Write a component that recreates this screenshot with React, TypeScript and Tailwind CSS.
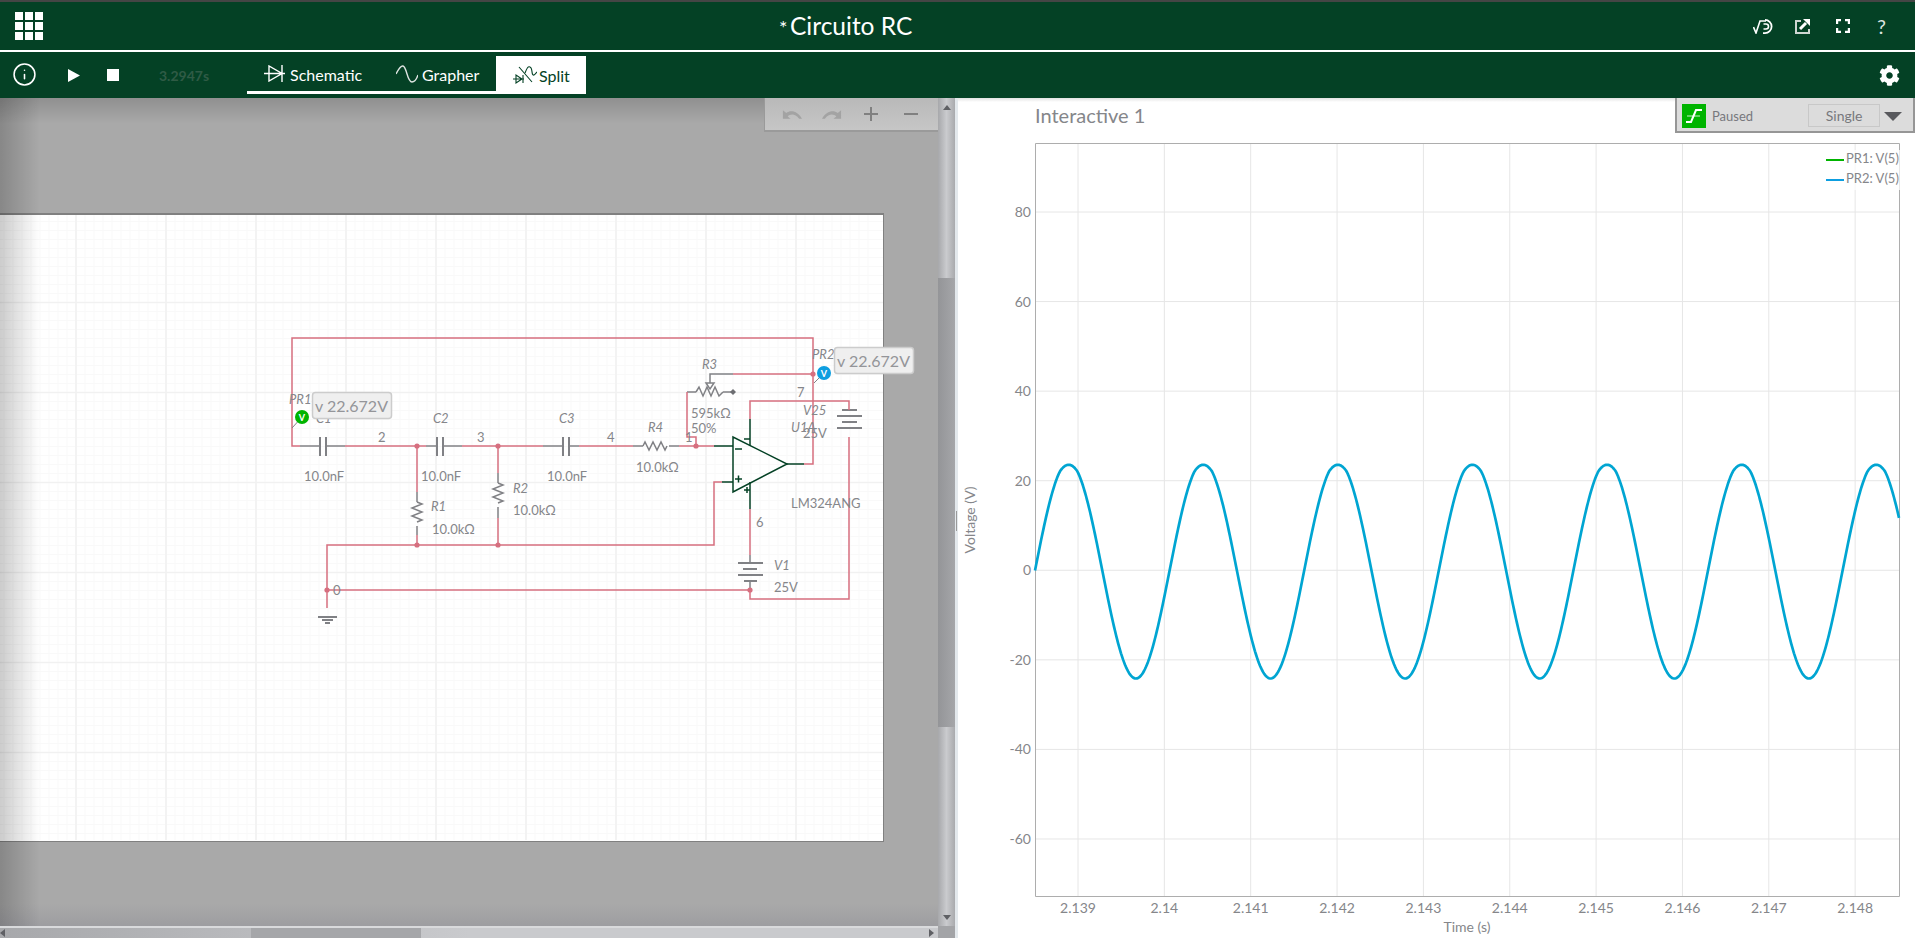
import { Info } from "lucide-react";
import { FaCog } from "react-icons/fa";

const GREEN = "#044125";

// scope trace, sampled per pixel; the top is softly clipped like the real output
const wave = Array.from({ length: 865 }, (_, i) => {
  const v = Math.sin((i / 134.6) * Math.PI * 2) * 108;
  const clipped = v > 99 ? 99 + (v - 99) * 0.75 : v;
  return `${1034 + i},${(570.5 - clipped).toFixed(1)}`;
}).join(" ");

const xTicks = ["2.139", "2.14", "2.141", "2.142", "2.143", "2.144", "2.145", "2.146", "2.147", "2.148"];
const yTicks = ["80", "60", "40", "20", "0", "-20", "-40", "-60"];

const pinkWires = [
  "300,446 292,446 292,338 813,338 813,464 804,464",
  "345,446 426,446",
  "462,446 543,446",
  "579,446 633,446",
  "679,446 714,446",
  "417,446 417,492",
  "417,535 417,545",
  "498,446 498,473",
  "498,518 498,545",
  "696,446 696,437 687,437 687,392",
  "813,374 733,374",
  "722,482 714,482 714,545 327,545 327,608",
  "327,590 750,590",
  "750,590 750,599 849,599 849,437",
  "849,410 849,401 750,401 750,419",
  "750,509 750,555",
];

const grayWires = [
  "300,446 320,446",
  "326,446 345,446",
  "426,446 437,446",
  "443,446 462,446",
  "543,446 563,446",
  "569,446 579,446",
  "633,446 643,446",
  "669,446 679,446",
  "417,492 417,502",
  "417,526 417,535",
  "498,473 498,483",
  "498,507 498,518",
  "687,392 696,392",
  "723,392 733,392",
  "733,374 710,374 710,383",
  "750,555 750,563",
  "750,581 750,590",
];

const plates = [
  "320,437 320,456",
  "326,437 326,456",
  "437,437 437,456",
  "443,437 443,456",
  "563,437 563,456",
  "569,437 569,456",
  "842,410 857,410",
  "837,416 862,416",
  "842,422 857,422",
  "837,428 862,428",
  "738,563 763,563",
  "743,569 757,569",
  "738,575 763,575",
  "744,581 757,581",
  "318,617 337,617",
  "322,620 333,620",
  "325,623 330,623",
];

const junctions = [
  [417, 446],
  [498, 446],
  [417, 545],
  [498, 545],
  [696, 446],
  [327, 590],
  [750, 590],
  [813, 374],
];

const labels: [string, number, number, boolean?][] = [
  ["PR1", 289, 404, true],
  ["C1", 316, 423, true],
  ["2", 378, 442],
  ["C2", 433, 423, true],
  ["3", 477, 442],
  ["C3", 559, 423, true],
  ["10.0nF", 304, 481],
  ["10.0nF", 421, 481],
  ["10.0nF", 547, 481],
  ["R1", 431, 511, true],
  ["10.0kΩ", 432, 534],
  ["R2", 513, 493, true],
  ["10.0kΩ", 513, 515],
  ["0", 333, 595],
  ["4", 607, 442],
  ["R4", 648, 432, true],
  ["10.0kΩ", 636, 472],
  ["1", 685, 442],
  ["R3", 702, 369, true],
  ["595kΩ", 691, 418],
  ["50%", 691, 433],
  ["7", 797, 397],
  ["PR2", 812, 359, true],
  ["V25", 803, 415, true],
  ["U1A", 791, 432, true],
  ["25V", 803, 438],
  ["LM324ANG", 791, 508],
  ["6", 756, 527],
  ["V1", 774, 570, true],
  ["25V", 774, 592],
];

function Circuit() {
  const majorX = Array.from({ length: 9 }, (_, i) => 76 + i * 90);
  const majorY = Array.from({ length: 6 }, (_, i) => 302.5 + i * 90);
  const minorX = Array.from({ length: 97 }, (_, i) => 4 + i * 9);
  const minorY = Array.from({ length: 69 }, (_, i) => 221.5 + i * 9);

  return (
    <svg viewBox="0 213 884 628" className="absolute top-0 left-0 w-[884px] h-[628px] overflow-visible">
      {minorX.map((x) => (
        <line key={x} x1={x} x2={x} y1={215} y2={840} className="stroke-[#f9f9f9]" />
      ))}
      {minorY.map((y) => (
        <line key={y} x1={0} x2={883} y1={y} y2={y} className="stroke-[#f9f9f9]" />
      ))}
      {majorX.map((x) => (
        <line key={x} x1={x} x2={x} y1={215} y2={840} strokeWidth={1.5} className="stroke-[#f1f1f1]" />
      ))}
      {majorY.map((y) => (
        <line key={y} x1={0} x2={883} y1={y} y2={y} strokeWidth={1.5} className="stroke-[#f1f1f1]" />
      ))}

      <g fill="none" strokeWidth={1.5} className="stroke-[#808185]">
        {grayWires.map((p) => (
          <polyline key={p} points={p} />
        ))}
        {plates.map((p) => (
          <polyline key={p} points={p} strokeWidth={2} />
        ))}
        <path d="M417 502 l5 2 l-10 4 l10 4 l-10 4 l10 4 l-5 2" />
        <path d="M498 483 l5 2 l-10 4 l10 4 l-10 4 l10 4 l-5 2" />
        <path d="M643 446 l2 -4 l4 8 l4 -8 l4 8 l4 -8 l4 8 l2 -4" />
        <path d="M696 392 l3 -5 l4 9 l4 -9 l4 9 l4 -9 l4 9 l4 -4" />
        <path d="M706 383 h8 l-4 6 z" />
      </g>
      <path d="M733 389 l3 3 l-3 3 l-3 -3 z" className="fill-[#6d6e72]" />

      <g fill="none" strokeWidth={1.5} className="stroke-[#d66f7f]">
        {pinkWires.map((p) => (
          <polyline key={p} points={p} />
        ))}
      </g>
      {junctions.map(([x, y]) => (
        <circle key={`${x}-${y}`} cx={x} cy={y} r={2.6} className="fill-[#d66f7f]" />
      ))}

      <g fill="none" strokeWidth={1.5} className="stroke-[#044125]">
        <polygon points="733,437 733,492 787,464" />
        <polyline points="714,446 733,446" />
        <polyline points="722,482 733,482" />
        <polyline points="750,419 750,446" />
        <polyline points="750,482 750,509" />
        <polyline points="787,464 804,464" />
        <path d="M735 449 h7 M735 479 h7 M738.5 475.5 v7 M744 439 h6 M744 490 h6 M747 487 v6" />
      </g>

      {labels.map(([t, x, y, italic]) => (
        <text key={`${t}-${x}`} x={x} y={y} className={`text-[13px] fill-[#85868a] ${italic ? "italic" : ""}`}>
          {t}
        </text>
      ))}

      <polyline points="302,417 292,428" strokeWidth={1} fill="none" className="stroke-[#808185]" />
      <circle cx={302} cy={417} r={7} className="fill-[#00b400]" />
      <text x={302} y={420.5} textAnchor="middle" className="text-[9px] font-bold fill-white">
        V
      </text>
      <polyline points="824,373 814,383" strokeWidth={1} fill="none" className="stroke-[#808185]" />
      <circle cx={824} cy={373} r={7} className="fill-[#0d9ee0]" />
      <text x={824} y={376.5} textAnchor="middle" className="text-[9px] font-bold fill-white">
        V
      </text>

      <rect x={312.5} y={392.5} width={79} height={26} rx={3} strokeWidth={1.5} className="fill-[#efefef] stroke-[#cccccc]" />
      <text x={315} y={412} className="text-[16px] fill-[#949599]">
        v 22.672V
      </text>
      <rect x={834.5} y={347.5} width={79} height={26} rx={3} strokeWidth={1.5} className="fill-[#efefef] stroke-[#cccccc]" />
      <text x={837} y={367} className="text-[16px] fill-[#949599]">
        v 22.672V
      </text>
    </svg>
  );
}

function Chart() {
  return (
    <svg viewBox="957 98 958 840" className="w-[958px] h-[840px]">
      {xTicks.map((t, i) => {
        const x = 1077 + i * 86.35;
        return (
          <g key={t}>
            <line x1={x} x2={x} y1={143} y2={896} strokeWidth={1} className="stroke-[#e6e6e6]" />
            <text x={x} y={913} textAnchor="middle" className="text-[14px] fill-[#85868a]">
              {t}
            </text>
          </g>
        );
      })}
      {yTicks.map((t, i) => {
        const y = 212 + i * 89.57;
        return (
          <g key={t}>
            <line x1={1034} x2={1898} y1={y} y2={y} strokeWidth={1} className="stroke-[#e6e6e6]" />
            <text x={1030} y={y + 5} textAnchor="end" className="text-[14px] fill-[#85868a]">
              {t}
            </text>
          </g>
        );
      })}
      <polyline points="1034.5,143.5 1898.5,143.5 1898.5,896.5 1034.5,896.5 1034.5,143.5" fill="none" strokeWidth={1} className="stroke-[#adadad]" />
      <polyline points={wave} fill="none" strokeWidth={2.7} strokeLinejoin="round" className="stroke-[#00a5d2]" />

      <rect x={1826} y={150} width={76} height={40} className="fill-white opacity-70" />
      <line x1={1825} x2={1843} y1={160} y2={160} strokeWidth={2} className="stroke-[#00b400]" />
      <line x1={1825} x2={1843} y1={180} y2={180} strokeWidth={2} className="stroke-[#0d9ee0]" />
      <text x={1845} y={163} className="text-[13px] fill-[#85868a]">
        PR1: V(5)
      </text>
      <text x={1845} y={183} className="text-[13px] fill-[#85868a]">
        PR2: V(5)
      </text>

      <text x={1466} y={932} textAnchor="middle" className="text-[14px] fill-[#85868a]">
        Time (s)
      </text>
      <text transform="translate(974 520) rotate(-90)" textAnchor="middle" className="text-[14px] fill-[#85868a]">
        Voltage (V)
      </text>
    </svg>
  );
}

function Header() {
  return (
    <div className="h-[50px] shrink-0 flex items-center border-t-2 border-[#454545] bg-[#044125] text-white">
      <div className="ml-[15px] grid grid-cols-3 gap-[2px]">
        {Array.from({ length: 9 }, (_, i) => (
          <span key={i} className="w-2 h-2 bg-white" />
        ))}
      </div>
      <div className="ml-[736px] flex items-baseline">
        <span className="text-[20px] leading-none w-[11px]">*</span>
        <span className="text-[24.5px] leading-none">Circuito RC</span>
      </div>
      <svg viewBox="0 0 23 15" className="ml-auto w-[23px] h-[15px]" fill="none" stroke="#fff">
        <path d="M0.5 8 L3 14 L7 2 H13" strokeWidth={1.6} />
        <path d="M12 0.9 A6.6 6.6 0 1 1 12 14.1 H10" strokeWidth={1.8} />
        <path d="M10.5 5 H13 A2.5 2.5 0 1 1 13 10 H10.5" strokeWidth={1.6} />
      </svg>
      <svg viewBox="0 0 15 15" className="ml-[19px] w-[15px] h-[15px]" fill="none">
        <path d="M6 2 H1 V14 H14 V10" strokeWidth={2} stroke="#cfd6d2" />
        <path d="M5 10 L11 4" strokeWidth={3} stroke="#fff" />
        <path d="M8 0 H15 V7 Z" fill="#fff" />
      </svg>
      <svg viewBox="0 0 14 14" className="ml-[26px] w-[14px] h-[14px]" fill="none" stroke="#fff" strokeWidth={2.4}>
        <path d="M1 5 V1 H5 M9 1 H13 V5 M13 9 V13 H9 M5 13 H1 V9" />
      </svg>
      <span className="ml-[27px] mr-[26px] w-3 text-[20px] leading-none text-[#dfe5e2]">?</span>
    </div>
  );
}

function Toolbar() {
  return (
    <div className="h-[46px] shrink-0 flex items-start bg-[#044125] text-white">
      <Info size={25} strokeWidth={1.5} className="ml-3 mt-[10px]" />
      <svg viewBox="0 0 12 13" className="ml-[31px] mt-[17px] w-3 h-[13px]" fill="#fff">
        <path d="M0 0 L12 6.5 L0 13 Z" />
      </svg>
      <span className="ml-[27px] mt-[17px] w-3 h-3 bg-white" />
      <span className="ml-[40px] mt-[13px] w-[50px] text-[14px] font-bold text-[#2f5b45]">3.2947s</span>
      <div className="ml-[38px] mt-1 h-[38px] flex items-stretch">
        <div className="w-[132px] pl-[17px] pt-[2px] flex items-center gap-[5px] border-b-[3px] border-white text-[16px]">
          <svg viewBox="0 0 21 17" className="-mt-[2px] w-[21px] h-[17px]" fill="none" stroke="#fff" strokeWidth={1.4}>
            <path d="M0 8.5 H21 M5 1 V16 L18 8.5 Z M18 0 V17" />
          </svg>
          <span>Schematic</span>
        </div>
        <div className="w-[117px] pl-[17px] pt-[2px] flex items-center gap-[4px] border-b-[3px] border-white text-[16px]">
          <svg viewBox="0 0 22 18" className="-mt-[2px] w-[22px] h-[18px]" fill="none" stroke="#dfe5e2" strokeWidth={1.4}>
            <path d="M0 9 C3 3 5 0.5 7 1 C11 2 11 17 16 17 C19 17 21 13 22 10" />
          </svg>
          <span>Grapher</span>
        </div>
        <div className="w-[90px] pl-[17px] pt-[2px] flex items-center gap-[2px] bg-white text-[16px] text-[#044125]">
          <svg viewBox="0 0 24 18" className="-mt-[2px] w-6 h-[18px]" fill="none" stroke="#044125" strokeWidth={1.1}>
            <path d="M0 13 H11 M3 9 V17 L9 13 Z M10 9 V17 M6 1 L19 16" />
            <path d="M12 7 C14 2 15 0 17 1 C20 2 18 10 21 9 C22 8.5 23 7 24 6" />
          </svg>
          <span>Split</span>
        </div>
      </div>
      <FaCog size={21} className="ml-auto mr-[15px] mt-[13px]" />
    </div>
  );
}

function UndoBar() {
  return (
    <div className="absolute top-0 right-0 w-[174px] h-[34px] flex items-center bg-gradient-to-b from-[#b9b9b9] to-[#c6c6c6] border-l border-b-2 border-[#9a9a9a] pl-[16px]">
      <svg viewBox="0 0 22 11" className="w-[21px] h-[11px] fill-[#a3a3a3]">
        <path d="M2 1 L2 10 L10 10 L7 7.5 C10 4.5 15 4.5 19 10 L22 10 C18 2 10 0 5.5 4 Z" />
      </svg>
      <svg viewBox="0 0 22 11" className="ml-[20px] w-[21px] h-[11px] fill-[#a3a3a3]">
        <path d="M20 1 L20 10 L12 10 L15 7.5 C12 4.5 7 4.5 3 10 L0 10 C4 2 12 0 16.5 4 Z" />
      </svg>
      <svg viewBox="0 0 14 14" className="ml-[21px] w-[14px] h-[14px]" stroke="#808080" strokeWidth={2}>
        <path d="M0 7 H14 M7 0 V14" />
      </svg>
      <svg viewBox="0 0 14 14" className="ml-[26px] w-[14px] h-[14px]" stroke="#808080" strokeWidth={2}>
        <path d="M0 7 H14" />
      </svg>
    </div>
  );
}

function SchematicPane() {
  return (
    <div className="w-[955px] shrink-0 flex flex-col">
      <div className="flex-1 min-h-0 flex">
        <div className="relative w-[938px] overflow-hidden bg-[#a9a9a9] pt-[115px]">
          <div className="relative w-[884px] h-[629px] bg-white border-t-2 border-r border-b border-[#808080] box-border">
            <div className="absolute -top-[2px] left-0">
              <Circuit />
            </div>
          </div>
          <div className="absolute inset-y-0 left-0 w-[40px] pointer-events-none bg-gradient-to-r from-black/20 to-transparent" />
          <div className="absolute inset-x-0 top-0 h-[26px] pointer-events-none bg-gradient-to-b from-black/15 to-transparent" />
          <div className="absolute inset-x-0 bottom-0 h-[22px] pointer-events-none bg-gradient-to-t from-[#5a5a70]/15 to-transparent" />
          <UndoBar />
        </div>
        <div className="w-[17px] flex flex-col bg-gradient-to-r from-[#a7a8ab] via-[#cacbce] to-[#a9aaad]">
          <div className="h-[180px] pt-[7px] flex justify-center">
            <span className="w-0 h-0 border-x-[4px] border-b-[5px] border-x-transparent border-b-[#5f6064]" />
          </div>
          <div className="h-[449px] bg-gradient-to-r from-[#949598] to-[#a5a6a9]" />
          <div className="flex-1 flex justify-center items-end pb-[6px]">
            <span className="w-0 h-0 border-x-[4px] border-t-[5px] border-x-transparent border-t-[#5f6064]" />
          </div>
        </div>
      </div>
      <div className="h-[12px] shrink-0 flex">
        <div className="w-[938px] flex items-center border-t-2 border-[#d9dadc] bg-gradient-to-r from-[#a7a8ab] via-[#c9cacd] to-[#c9cacd]">
          <span className="w-0 h-0 border-y-[4px] border-r-[5px] border-y-transparent border-r-[#5f6064]" />
          <span className="ml-[246px] w-[170px] h-full bg-[#a5a6a9]" />
          <span className="ml-auto mr-[4px] w-0 h-0 border-y-[4px] border-l-[5px] border-y-transparent border-l-[#5f6064]" />
        </div>
        <div className="flex-1 bg-[#a3a4a7]" />
      </div>
    </div>
  );
}

function GrapherPane() {
  return (
    <div className="relative flex-1 min-w-0 bg-white">
      <div className="absolute top-0 left-0 right-0 h-[4px] bg-gradient-to-b from-[#e2e2e2] to-white" />
      <div className="absolute top-[4px] left-[77px] text-[20px] leading-[26px] text-[#85868a]">Interactive 1</div>
      <div className="absolute z-10 top-0 right-0 w-[240px] h-[35px] flex items-start bg-[#dcdcdc] border-2 border-t-0 border-[#969696] pl-[5px] pt-[6px] text-[#77787c] text-[13px]">
        <span className="w-6 h-6 bg-[#00b400] flex items-center justify-center">
          <svg viewBox="0 0 20 20" className="w-5 h-5" fill="none" stroke="#fff" strokeWidth={2}>
            <path d="M2 16 H7 L12 4 H18" />
            <path d="M3 10 H16" strokeWidth={0.8} />
          </svg>
        </span>
        <span className="ml-[6px] leading-6">Paused</span>
        <span className="ml-[55px] w-[72px] h-[23px] border border-[#c8c8c8] flex items-center justify-center text-[14px]">Single</span>
        <span className="ml-[4px] mt-[8px] w-0 h-0 border-x-[9px] border-t-[9px] border-x-transparent border-t-[#58595d]" />
      </div>
      <Chart />
    </div>
  );
}

export default function App() {
  return (
    <div className="w-full h-screen flex flex-col overflow-hidden font-['Lato','Open_Sans',sans-serif]" style={{ color: GREEN }}>
      <Header />
      <div className="h-[2px] shrink-0 bg-white" />
      <Toolbar />
      <div className="flex-1 min-h-0 flex">
        <SchematicPane />
        <div className="relative w-[3px] shrink-0 bg-[#e3e8ec]">
          <span className="absolute left-[1px] top-[413px] w-[1px] h-[20px] bg-[#9a9a9a]" />
        </div>
        <GrapherPane />
      </div>
    </div>
  );
}
